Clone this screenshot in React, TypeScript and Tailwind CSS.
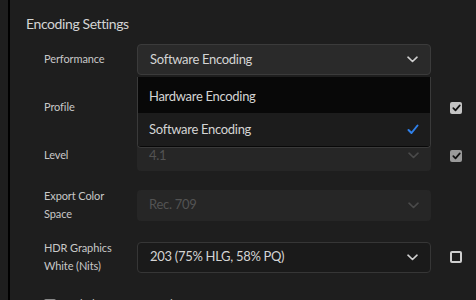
import React from "react";

const Chevron = ({ dim = false }: { dim?: boolean }) => (
  <svg width="11" height="7" viewBox="0 0 11 7" fill="none">
    <path d="M1 1.2l4.5 4.3L10 1.2" stroke={dim ? "#4a4a4a" : "#d0d0d0"} strokeWidth="1.6" strokeLinecap="round" strokeLinejoin="round" />
  </svg>
);

const CheckBox = ({ checked, dim = false }: { checked: boolean; dim?: boolean }) =>
  checked ? (
    <div className={`flex h-3 w-3 items-center justify-center rounded-[2px] ${dim ? "bg-[#9a9a9a]" : "bg-[#c4c4c4]"}`}>
      <svg width="9" height="8" viewBox="0 0 9 8" fill="none">
        <path d="M1.3 4.2l2.2 2.2L7.8 1.4" stroke="#111" strokeWidth="1.7" strokeLinecap="round" strokeLinejoin="round" />
      </svg>
    </div>
  ) : (
    <div className="h-3 w-3 rounded-[2px] border-2 border-[#cfcfcf]" />
  );

type SelectProps = { value: string; variant: "normal" | "disabled" | "dark" };

const Select = ({ value, variant }: SelectProps) => {
  const styles = {
    normal: "bg-[#2a2a2a] border border-[#3b3b3b] text-[#d4d4d4]",
    disabled: "bg-[#262626] text-[#535353]",
    dark: "bg-[#1a1a1a] border border-[#363636] text-[#d4d4d4]",
  }[variant];
  return (
    <div className={`flex h-[31px] w-[294px] items-center justify-between rounded-[4px] pl-[12px] pr-[12px] text-[13px] tracking-[-0.3px] ${styles}`}>
      <span>{value}</span>
      <Chevron dim={variant === "disabled"} />
    </div>
  );
};

export default function App() {
  return (
    <div className="flex h-[300px] w-[476px] overflow-hidden bg-[#1e1e1e] font-['Lato',sans-serif] text-[#c8c8c8]">
      <div className="w-2 shrink-0 bg-[#1e1e1e]" />
      <div className="w-[2px] shrink-0 bg-black" />
      <div className="flex-1 pl-4 pt-[14px]">
        <h2 className="text-[14px] leading-[20px] tracking-[-0.4px] text-[#d4d4d4]">Encoding Settings</h2>
        <div className="mt-[10px] flex flex-col pl-[18px] text-[11px] tracking-[-0.1px]">
          <div className="flex items-center">
            <div className="w-[93px]">Performance</div>
            <div className="relative">
              <Select value="Software Encoding" variant="normal" />
              <div className="absolute left-0 top-full z-10 mt-[2px] w-[294px] overflow-hidden rounded-b-[4px] border border-t-0 border-[#3a3a3a] bg-[#080808] pt-[4px] pb-[1px] text-[13px] tracking-[-0.3px] text-[#d4d4d4]">
                <div className="flex h-[32px] items-center pl-[11px]">Hardware Encoding</div>
                <div className="flex h-[33px] items-center justify-between bg-[#1c1c1c] pl-[11px] pr-[11px]">
                  <span>Software Encoding</span>
                  <svg width="12" height="11" viewBox="0 0 12 11" fill="none">
                    <path d="M1.5 6l3 3L10.5 1.5" stroke="#2f80ea" strokeWidth="2" strokeLinecap="round" strokeLinejoin="round" />
                  </svg>
                </div>
              </div>
            </div>
          </div>

          <div className="mt-[17px] flex items-center">
            <div className="w-[93px]">Profile</div>
            <Select value="" variant="normal" />
            <div className="ml-[19px]">
              <CheckBox checked />
            </div>
          </div>

          <div className="mt-[17px] flex items-center">
            <div className="w-[93px]">Level</div>
            <Select value="4.1" variant="disabled" />
            <div className="ml-[19px]">
              <CheckBox checked dim />
            </div>
          </div>

          <div className="mt-[16px] flex items-center">
            <div className="w-[93px] leading-[18px]">
              <div>Export Color</div>
              <div>Space</div>
            </div>
            <Select value="Rec. 709" variant="disabled" />
          </div>

          <div className="mt-[16px] flex items-center">
            <div className="w-[93px] leading-[18px]">
              <div>HDR Graphics</div>
              <div>White (Nits)</div>
            </div>
            <Select value="203 (75% HLG, 58% PQ)" variant="dark" />
            <div className="ml-[19px]">
              <CheckBox checked={false} />
            </div>
          </div>

          <div className="mt-[19px] flex h-[21px] items-center">
            <div className="h-3 w-3 rounded-[2px] border-2 border-[#8a8a8a]" />
            <span className="ml-[10px]">Include HDR10 Metadata</span>
          </div>
        </div>
      </div>
    </div>
  );
}
